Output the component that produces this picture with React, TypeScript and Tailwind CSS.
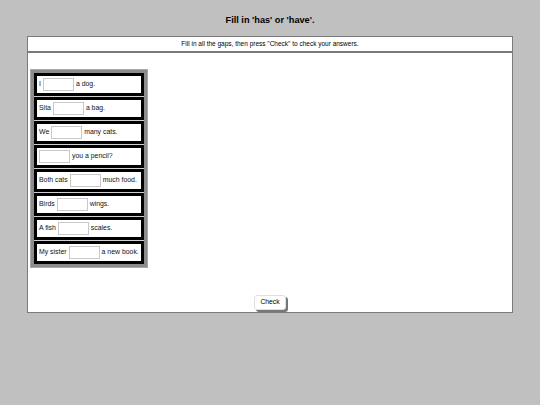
import React from "react";

const items: [string, string][] = [
  ["I", "a dog."],
  ["Sita", "a bag."],
  ["We", "many cats."],
  ["", "you a pencil?"],
  ["Both cats", "much food."],
  ["Birds", "wings."],
  ["A fish", "scales."],
  ["My sister", "a new book."],
];

export default function App() {
  return (
    <div
      className="w-[540px] h-[405px] bg-[#c0c0c0] text-black overflow-hidden"
      style={{ fontFamily: '"Liberation Sans", Arial, sans-serif' }}
    >
      <div className="h-[36px] flex items-center justify-center pt-[6px]">
        <h1 className="text-[9.2px] font-bold leading-none">Fill in 'has' or 'have'.</h1>
      </div>
      <div className="mx-[27px] h-[277px] bg-white border border-[#7a7a7a] flex flex-col">
        <div className="h-[16px] flex items-center justify-center text-[6.5px] border-b-2 border-[#7a7a7a] leading-none">
          Fill in all the gaps, then press "Check" to check your answers.
        </div>
        <div className="flex-1 flex flex-col px-[2px]">
          <div className="mt-[16px] self-start bg-[#8c8c8c] border border-[#a8a8a8] p-[3px]">
            <div className="flex flex-col">
              {items.map(([a, b], i) => (
                <div
                  key={i}
                  className={`bg-black p-[3px] ${i < items.length - 1 ? "border-b border-[#d0d0d0]" : ""}`}
                >
                  <div className="bg-white h-[17px] flex items-center px-[2px] text-[6.9px] text-[#111] leading-none whitespace-nowrap">
                    {a && <span className="mr-[2px]">{a}</span>}
                    <span className="inline-block w-[31px] h-[13px] border border-[#c8c8c8] bg-white" />
                    <span className="ml-[2px]">{b}</span>
                  </div>
                </div>
              ))}
            </div>
          </div>
          <div className="mt-auto mb-[2px] flex justify-center">
            <button
              className="h-[15px] px-[5px] bg-white text-[6.75px] leading-none rounded-[3px] border border-[#e0e0e0] shadow-[2px_2px_0_#777]"
              style={{ fontFamily: '"Liberation Sans", Arial, sans-serif' }}
            >
              Check
            </button>
          </div>
        </div>
      </div>
    </div>
  );
}
